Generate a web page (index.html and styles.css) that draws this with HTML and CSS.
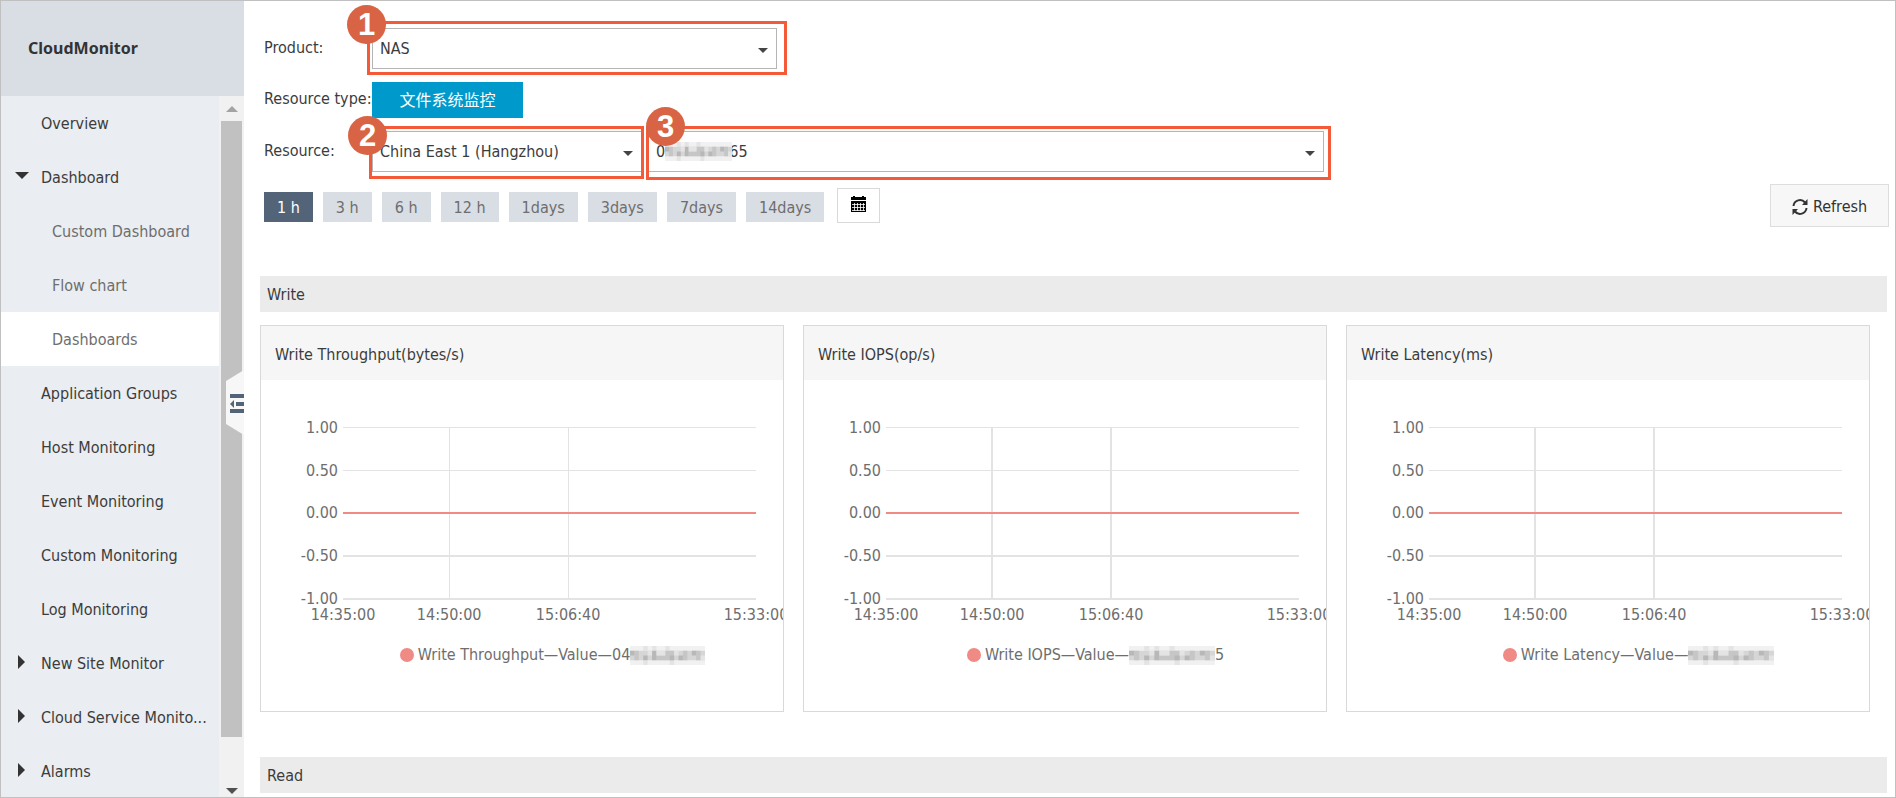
FILE: index.html
```html
<!DOCTYPE html>
<html lang="en">
<head>
<meta charset="utf-8">
<title>CloudMonitor</title>
<link rel="stylesheet" href="styles.css">
</head>
<body>
<svg width="0" height="0" class="defs" aria-hidden="true">
  <defs>
    <symbol id="mosaic" viewBox="0 0 17 4" preserveAspectRatio="none">
      <path fill="#f1f1f1" d="M0 0h17v4H0z"/>
      <path fill="#e4e4e4" d="M3 0h1v1H3zM5 0h1v1H5zM8 0h1v1H8zM3 3h1v1H3zM9 3h1v1H9z"/>
      <path fill="#d6d6d6" d="M0 1h17v2H0z"/>
      <path fill="#c6c6c6" d="M1 1h1v2H1zM6 2h3v1H6zM8 1h2v2H8zM12 1h1v2h-1zM15 1h1v2h-1z"/>
      <path fill="#b8b8b8" d="M0 1h1v1H0zM3 2h1v1H3zM5 1h1v2H5zM9 2h1v1H9zM11 2h1v1h-1zM14 1h1v1h-1z"/>
      <path fill="#e4e4e4" d="M4 1h1v1H4zM6 1h2v1H6zM10 1h1v1h-1zM16 2h1v1h-1z"/>
    </symbol>
  </defs>
</svg>
<div class="app">
  <aside class="sidebar">
    <h1 class="brand">CloudMonitor</h1>
    <div class="nav-wrap">
      <nav class="nav">
        <a href="#" class="item">Overview</a>
        <a href="#" class="item open">Dashboard</a>
        <a href="#" class="item sub">Custom Dashboard</a>
        <a href="#" class="item sub">Flow chart</a>
        <a href="#" class="item sub active">Dashboards</a>
        <a href="#" class="item">Application Groups</a>
        <a href="#" class="item">Host Monitoring</a>
        <a href="#" class="item">Event Monitoring</a>
        <a href="#" class="item">Custom Monitoring</a>
        <a href="#" class="item">Log Monitoring</a>
        <a href="#" class="item closed">New Site Monitor</a>
        <a href="#" class="item closed">Cloud Service Monito...</a>
        <a href="#" class="item closed">Alarms</a>
      </nav>
      <div class="scrollbar"><i class="up"></i><i class="thumb"></i><i class="down"></i></div>
    </div>
    <button class="collapse" aria-label="Collapse menu">
      <svg width="18" height="65" viewBox="0 0 18 65"><path d="M18 0 0 11v43l18 11z" fill="#f7f7f7"/><path d="M4 24h14v4H4zM10 32h8v4h-8zM4 39h14v4H4zM4 34l4-4v8z" fill="#546478"/></svg>
    </button>
  </aside>

  <main class="main">
    <form class="filters">
      <div class="row">
        <label for="product">Product:</label>
        <div class="pick product"><select id="product"><option>NAS</option></select><span class="frame"></span><b class="badge">1</b></div>
      </div>
      <div class="row type">
        <span class="label">Resource type:</span>
        <button type="button" class="type-btn">文件系统监控</button>
      </div>
      <div class="row">
        <label for="region">Resource:</label>
        <div class="pick region"><select id="region"><option>China East 1 (Hangzhou)</option></select><span class="frame"></span><b class="badge">2</b></div>
        <div class="pick instance"><select id="instance" aria-label="Instance"><option>0&#8199;&#8199;&#8199;&#8199;&#8199;&#8199;&#8199;65</option></select><svg class="mosaic over"><use href="#mosaic"/></svg><span class="frame"></span><b class="badge">3</b></div>
      </div>
    </form>

    <div class="toolbar">
      <div class="ranges">
        <button class="on">1 h</button><button>3 h</button><button>6 h</button><button>12 h</button><button>1days</button><button>3days</button><button>7days</button><button>14days</button>
      </div>
      <button class="calendar" aria-label="Choose dates">
        <svg width="15" height="16" viewBox="0 0 15 16"><path d="M0 1h2V0h2v1h7V0h2v1h2v3H0zM0 5h15v11H0z"/><path d="M1 8.500h13M1 11.500h13M1 14.500h13M3.500 7v8M6.500 7v8M9.500 7v8M12.500 7v8" stroke="#fff" stroke-width=".8"/></svg>
      </button>
      <button class="refresh">
        <svg width="16" height="16" viewBox="0 0 16 16"><path d="M1.500 7a6.500 6.500 0 0 1 11.500-3.500M14.500 9A6.500 6.500 0 0 1 3 12.500" fill="none" stroke="#333" stroke-width="2"/><path d="M15.500 0v6H10zM.5 16v-6H6z" fill="#333"/></svg>
        Refresh
      </button>
    </div>

    <h2 class="section">Write</h2>
    <div class="cards">
      <section class="card">
        <h3>Write Throughput(bytes/s)</h3>
        <div class="plot"><svg class="chart">
          <g class="grid"><line class="thin" x1="0" x2="100%" y1="0" y2="0"/><line class="thin" x1="0" x2="100%" y1="43" y2="43"/><line x1="0" x2="100%" y1="129" y2="129"/><line x1="0" x2="100%" y1="172" y2="172"/><line class="thin" x1="25.700%" x2="25.700%" y1="0" y2="172"/><line class="thin" x1="54.500%" x2="54.500%" y1="0" y2="172"/></g>
          <line class="series" x1="0" x2="100%" y1="86" y2="86"/>
          <g class="y"><text x="-5" y="6">1.00</text><text x="-5" y="49">0.50</text><text x="-5" y="91">0.00</text><text x="-5" y="134">-0.50</text><text x="-5" y="177">-1.00</text></g>
          <g class="x"><text x="0" y="193">14:35:00</text><text x="25.700%" y="193">14:50:00</text><text x="54.500%" y="193">15:06:40</text><text x="100%" y="193">15:33:00</text></g>
        </svg></div>
        <p class="legend"><i class="dot"></i>Write Throughput—Value—04<svg class="mosaic"><use href="#mosaic"/></svg></p>
      </section>
      <section class="card">
        <h3>Write IOPS(op/s)</h3>
        <div class="plot"><svg class="chart">
          <g class="grid"><line class="thin" x1="0" x2="100%" y1="0" y2="0"/><line class="thin" x1="0" x2="100%" y1="43" y2="43"/><line x1="0" x2="100%" y1="129" y2="129"/><line x1="0" x2="100%" y1="172" y2="172"/><line x1="25.700%" x2="25.700%" y1="0" y2="172"/><line x1="54.500%" x2="54.500%" y1="0" y2="172"/></g>
          <line class="series" x1="0" x2="100%" y1="86" y2="86"/>
          <g class="y"><text x="-5" y="6">1.00</text><text x="-5" y="49">0.50</text><text x="-5" y="91">0.00</text><text x="-5" y="134">-0.50</text><text x="-5" y="177">-1.00</text></g>
          <g class="x"><text x="0" y="193">14:35:00</text><text x="25.700%" y="193">14:50:00</text><text x="54.500%" y="193">15:06:40</text><text x="100%" y="193">15:33:00</text></g>
        </svg></div>
        <p class="legend"><i class="dot"></i>Write IOPS—Value—<svg class="mosaic wider"><use href="#mosaic"/></svg><span class="tail">5</span></p>
      </section>
      <section class="card">
        <h3>Write Latency(ms)</h3>
        <div class="plot"><svg class="chart">
          <g class="grid"><line class="thin" x1="0" x2="100%" y1="0" y2="0"/><line class="thin" x1="0" x2="100%" y1="43" y2="43"/><line x1="0" x2="100%" y1="129" y2="129"/><line x1="0" x2="100%" y1="172" y2="172"/><line x1="25.700%" x2="25.700%" y1="0" y2="172"/><line x1="54.500%" x2="54.500%" y1="0" y2="172"/></g>
          <line class="series" x1="0" x2="100%" y1="86" y2="86"/>
          <g class="y"><text x="-5" y="6">1.00</text><text x="-5" y="49">0.50</text><text x="-5" y="91">0.00</text><text x="-5" y="134">-0.50</text><text x="-5" y="177">-1.00</text></g>
          <g class="x"><text x="0" y="193">14:35:00</text><text x="25.700%" y="193">14:50:00</text><text x="54.500%" y="193">15:06:40</text><text x="100%" y="193">15:33:00</text></g>
        </svg></div>
        <p class="legend"><i class="dot"></i>Write Latency—Value—<svg class="mosaic wider"><use href="#mosaic"/></svg></p>
      </section>
    </div>
    <h2 class="section">Read</h2>
  </main>
</div>
</body>
</html>
```
FILE: styles.css
```css
* { box-sizing: border-box; }
body {
  margin: 0;
  font: 16px/24px "DejaVu Sans Condensed", "Noto Sans", "Noto Sans CJK SC", sans-serif;
  color: #3c3c3c;
  background: #fff;
}
button, select { font: inherit; color: inherit; margin: 0; }
h1, h2, h3, p { margin: 0; font-size: 16px; font-weight: 400; }
.defs { position: absolute; }

.app { display: flex; height: 100vh; border: 1px solid #c0c0c0; overflow: hidden; }

.sidebar { position: relative; flex: none; display: flex; flex-direction: column; width: 243px; background: #eaedf1; }
.brand { flex: none; height: 95px; padding: 0 27px; font-family: "Noto Sans", sans-serif; line-height: 94px; font-weight: 700; color: #333; background: #d9dde4; }
.nav-wrap { flex: 1; min-height: 0; display: flex; }
.nav { flex: 1; overflow: hidden; }
.item { position: relative; display: block; height: 54px; padding-left: 40px; line-height: 56px; color: #3c3c3c; text-decoration: none; white-space: nowrap; }
.sub { padding-left: 51px; color: #6e6e6e; }
.active { background: #fff; }
.open::before, .closed::before { content: ""; position: absolute; }
.open::before { left: 14px; top: 22px; border: 7px solid transparent; border-top-color: #333; border-bottom: 0; }
.closed::before { left: 17px; top: 19px; border: 7px solid transparent; border-left-color: #333; border-right: 0; }
.scrollbar { flex: none; display: flex; flex-direction: column; align-items: center; width: 25px; background: #f1f1f1; }
.up { border: 6px solid transparent; border-bottom-color: #a3a3a3; border-top: 0; margin: 10px 0 9px; }
.thumb { flex: 1; width: 21px; background: #c1c1c1; margin-bottom: 51px; }
.down { border: 6px solid transparent; border-top-color: #505050; border-bottom: 0; margin-bottom: 3px; }
.collapse { position: absolute; right: 0; top: 369px; padding: 0; border: 0; background: none; line-height: 0; }

.main { flex: 1; min-width: 0; padding: 27px 8px 0 16px; }
.filters { display: flex; flex-direction: column; padding-left: 4px; }
.row { display: flex; height: 42px; }
.row label, .label { flex: none; width: 108px; line-height: 40px; white-space: nowrap; }
.row.type { height: 36px; margin: 12px 0 13px; }
.row .label { line-height: 34px; }
.pick { position: relative; height: 41px; }
.pick::after { content: ""; position: absolute; right: 9px; top: 20px; border: 5px solid transparent; border-top-color: #444; border-bottom: 0; }
.pick select { appearance: none; width: 100%; height: 100%; padding: 0 7px; border: 1px solid #b5b5b5; border-radius: 0; background: #fff; }
.product { width: 405px; }
.region { width: 270px; }
.instance { width: 676px; margin-left: 6px; }
.frame { position: absolute; inset: -7px -10px -6px -5px; border: 3px solid #f45a38; pointer-events: none; }
.region .frame { inset: -5px -2px -7px -3px; }
.instance .frame { inset: -5px -7px -8px -2px; }
.badge { position: absolute; left: -25px; top: -23px; width: 39px; height: 39px; border-radius: 50%; background: #d96445; color: #fff; font: 700 31px/39px "Liberation Sans", sans-serif; text-align: center; }
.region .badge { left: -24px; top: -15px; }
.instance .badge { left: -2px; top: -24px; }
.type-btn { width: 151px; height: 36px; padding: 0 0 2px; border: 0; background: #0099cc; color: #fff; font-family: "Noto Sans CJK SC", sans-serif; }
.mosaic { width: 75px; height: 19px; }
.over { position: absolute; left: 17px; top: 11px; width: 67px; }
.wider { width: 86px; }

.toolbar { display: flex; align-items: center; height: 43px; margin-top: 11px; padding-left: 4px; }
.ranges { display: flex; gap: 10px; padding-top: 2px; }
.ranges button { height: 30px; padding: 0 13px; border: 0; background: #d9dde4; color: #6e6e6e; line-height: 32px; }
.ranges .on { background: #546478; color: #fff; }
.calendar { width: 43px; height: 35px; margin-left: 13px; padding: 0 0 4px; border: 1px solid #d9d9d9; background: #fff; line-height: 0; }
.refresh { display: flex; align-items: center; justify-content: center; gap: 5px; height: 43px; width: 119px; margin: 0 -2px 0 auto; padding: 2px 0 0; border: 1px solid #ddd; background: #f7f7f7; color: #333; }

.section { height: 36px; padding: 0 7px; line-height: 38px; background: #ebebeb; }
.toolbar + .section { margin-top: 49px; }
.cards { display: grid; grid-template-columns: repeat(3, 1fr); gap: 19px; margin: 13px 17px 45px 0; }
.card { height: 387px; border: 1px solid #d9d9d9; overflow: hidden; }
.card h3 { height: 54px; padding: 0 14px; line-height: 58px; background: #f6f6f6; }
.plot { height: 204px; margin: 47px 27px 0 82px; }
.chart { display: block; width: 100%; height: 204px; overflow: visible; }
.grid line { stroke: #e3e3e3; stroke-width: 2; shape-rendering: crispEdges; }
.grid .thin { stroke-width: 1; }
.series { stroke: #f08a85; stroke-width: 2; }
.chart text { fill: #6e6e6e; font-size: 16px; }
.y text { text-anchor: end; }
.x text { text-anchor: middle; }
.legend { display: flex; align-items: center; justify-content: center; height: 24px; margin-top: 12px; padding-left: 61px; color: #6e6e6e; white-space: nowrap; }
.dot { width: 14px; height: 14px; margin-right: 4px; border-radius: 50%; background: #f08a85; }
```
